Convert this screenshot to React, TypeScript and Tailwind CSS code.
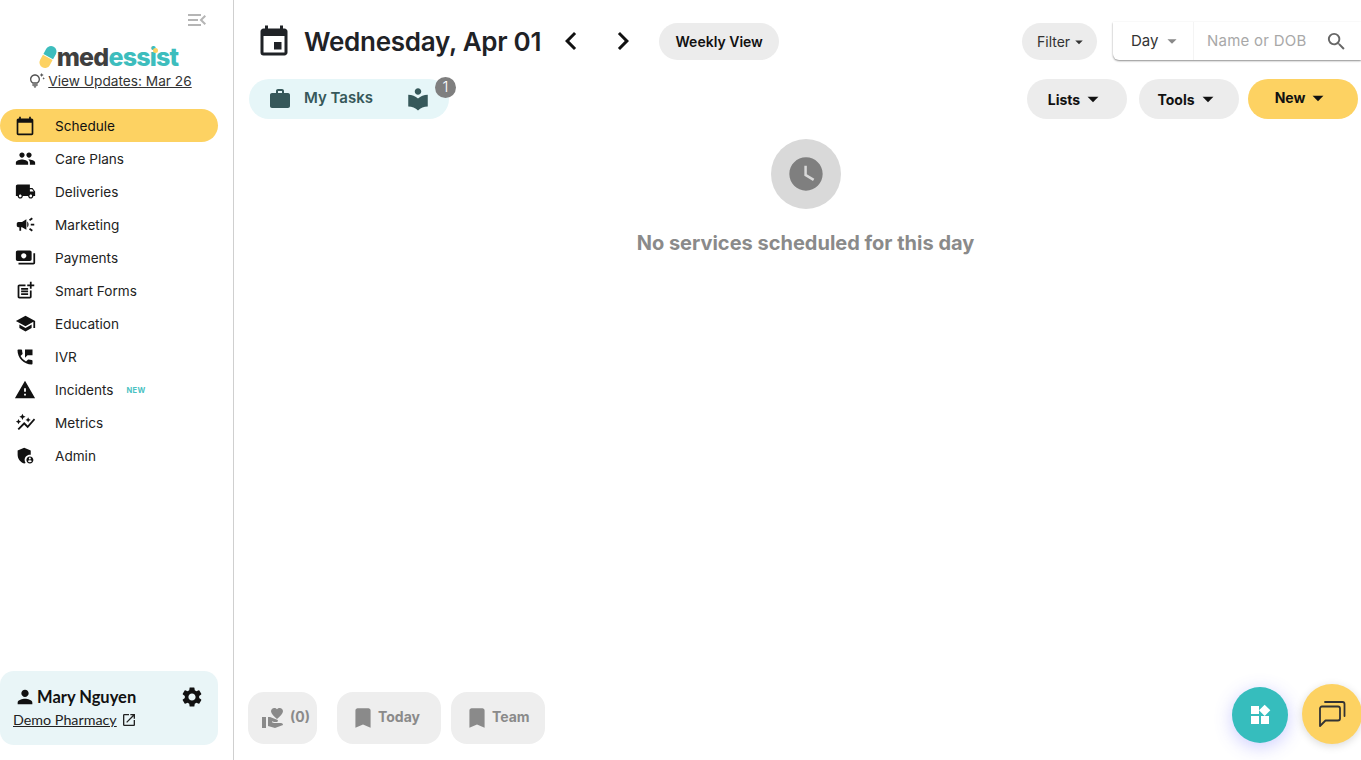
import type { ReactNode } from "react";
import {
  MdAdminPanelSettings,
  MdArrowDropDown,
  MdAutoGraph,
  MdBookmark,
  MdCalendarToday,
  MdCampaign,
  MdChevronLeft,
  MdChevronRight,
  MdEvent,
  MdLocalLibrary,
  MdLocalShipping,
  MdMenuOpen,
  MdOpenInNew,
  MdOutlineTipsAndUpdates,
  MdPayments,
  MdPeople,
  MdPermPhoneMsg,
  MdPerson,
  MdPostAdd,
  MdSchool,
  MdSearch,
  MdSettings,
  MdVolunteerActivism,
  MdWarning,
  MdWatchLater,
  MdWidgets,
  MdWork,
} from "react-icons/md";

const NAV: { label: string; icon: ReactNode; isNew?: boolean; active?: boolean }[] = [
  { label: "Schedule", icon: <MdCalendarToday size={20} />, active: true },
  { label: "Care Plans", icon: <MdPeople size={21} /> },
  { label: "Deliveries", icon: <MdLocalShipping size={21} /> },
  { label: "Marketing", icon: <MdCampaign size={21} /> },
  { label: "Payments", icon: <MdPayments size={21} /> },
  { label: "Smart Forms", icon: <MdPostAdd size={21} /> },
  { label: "Education", icon: <MdSchool size={21} /> },
  { label: "IVR", icon: <MdPermPhoneMsg size={20} /> },
  { label: "Incidents", icon: <MdWarning size={22} />, isNew: true },
  { label: "Metrics", icon: <MdAutoGraph size={21} /> },
  { label: "Admin", icon: <MdAdminPanelSettings size={21} /> },
];

function Logo() {
  return (
    <div className="flex h-[26px] items-center justify-center">
      <svg width="18" height="22" viewBox="0 0 18 22" className="mt-[-1px] overflow-visible">
        <g transform="rotate(29 9 11)">
          <path d="M3.5 10.5V4.75a5.5 5.5 0 0 1 11 0V10.5z" fill="#3dbdbd" />
          <path d="M3.5 11.5h11v5.75a5.5 5.5 0 0 1-11 0z" fill="#fdd262" />
        </g>
      </svg>
      <span className="relative text-[25px] leading-none font-extrabold tracking-[-0.8px] text-[#3f3f3f]">
        med<span className="text-[#3dbdbd]">essist</span>
        <span className="absolute top-[3px] right-[20px] h-[5px] w-[5px] rounded-full bg-[#fdd262]" />
      </span>
    </div>
  );
}

function Sidebar() {
  return (
    <aside className="flex h-full w-[234px] shrink-0 flex-col border-r border-[#cfcfcf] pb-[15px]">
      <div className="flex justify-end pt-[8px] pr-[24px] text-[#b5b5b5]">
        <MdMenuOpen size={24} />
      </div>
      <div className="mt-[12px] pr-[16px]">
        <Logo />
      </div>
      <div className="mt-[1px] flex items-center justify-center gap-[3px] pr-[12px] text-[13.7px] leading-[20px] text-[#333]">
        <MdOutlineTipsAndUpdates size={16} className="text-[#555]" />
        <span className="underline">View Updates: Mar 26</span>
      </div>
      <nav className="mt-[18px] flex flex-col">
        {NAV.map((item) => (
          <div
            key={item.label}
            className={
              item.active
                ? "flex h-[33px] w-[218px] items-center rounded-full bg-[#fdd262] text-[13.6px] text-[#111]"
                : "flex h-[33px] w-[218px] items-center text-[13.6px] text-[#222]"
            }
          >
            <span className="flex w-[50px] justify-center text-[#111]">{item.icon}</span>
            <span className="mt-[2px] ml-[5px]">{item.label}</span>
            {item.isNew && (
              <span className="mt-[2px] ml-[13px] text-[7.5px] font-bold tracking-[0.3px] text-[#49c2c2]">NEW</span>
            )}
          </div>
        ))}
      </nav>
      <div className="mt-auto h-[74px] w-[218px] rounded-[14px] bg-[#e9f5f7] pt-[14px] pr-[14px] pl-[13px]">
        <div className="flex items-center justify-between">
          <div className="flex items-center gap-[1px] pl-[1px]">
            <MdPerson size={22} className="text-[#111]" />
            <span className="font-['Lato',sans-serif] text-[16.5px] leading-[22px] font-bold text-[#111]">
              Mary Nguyen
            </span>
          </div>
          <MdSettings size={24} className="text-[#111]" />
        </div>
        <div className="mt-[1px] flex items-center gap-[4px] font-['Lato',sans-serif] text-[14.3px] leading-[20px] text-[#222]">
          <span className="underline">Demo Pharmacy</span>
          <MdOpenInNew size={16} />
        </div>
      </div>
    </aside>
  );
}

function PillButton({ label, yellow }: { label: string; yellow?: boolean }) {
  return (
    <button
      className={
        yellow
          ? "flex h-[40px] w-[110px] items-center justify-center rounded-full bg-[#fdd262] pb-[3px] text-[14px] font-bold text-[#111]"
          : "flex h-[40px] w-[100px] items-center justify-center rounded-full bg-[#ececec] text-[14px] font-bold text-[#111]"
      }
    >
      {label}
      <MdArrowDropDown size={26} />
    </button>
  );
}

function BottomButton({ icon, label, size }: { icon: ReactNode; label: string; size: string }) {
  return (
    <div className={`flex h-[52px] ${size} items-center rounded-[16px] bg-[#eeeeee] pl-[13px] text-[14px] font-bold text-[#8a8a8a]`}>
      {icon}
      <span className="pb-[3px]">{label}</span>
    </div>
  );
}

function Main() {
  return (
    <main className="flex h-full min-w-0 flex-1 flex-col pl-[14px]">
      <div className="flex items-start pt-[22px]">
        <div className="flex h-[38px] items-center">
          <MdEvent size={36} className="mt-[2px] ml-[8px] text-[#1f2226]" />
          <h1 className="mt-[1px] ml-[12px] text-[26px] font-semibold tracking-[-0.27px] whitespace-nowrap text-[#1f2226]">
            Wednesday, Apr 01
          </h1>
          <MdChevronLeft size={36} className="ml-[12px] text-[#111]" />
          <MdChevronRight size={36} className="ml-[16px] text-[#111]" />
          <button className="ml-[18px] flex h-[37px] w-[120px] items-center justify-center rounded-full bg-[#ececec] text-[14px] font-semibold text-[#111]">
            Weekly View
          </button>
        </div>
        <div className="ml-auto flex items-center">
          <button className="mt-[1px] flex h-[37px] w-[75px] items-center justify-start rounded-full bg-[#ececec] pl-[15px] text-[14px] text-[#333]">
            Filter
            <MdArrowDropDown size={18} />
          </button>
          <div className="ml-[16px] flex h-[38px] w-[248px] items-center rounded-bl-[6px] bg-white shadow-[0_1px_2px_rgba(0,0,0,0.45)]">
            <div className="flex h-full w-[81px] items-center border-r border-[#f4f4f4] pl-[18px] text-[15px] text-[#333]">
              Day
              <MdArrowDropDown size={22} className="ml-[3px] text-[#888]" />
            </div>
            <span className="ml-[13px] text-[15px] tracking-[0.25px] text-[#a8a8a8]">Name or DOB</span>
            <MdSearch size={23} className="ml-[18px] text-[#666]" />
          </div>
        </div>
      </div>
      <div className="mt-[19px] flex items-start">
        <div className="relative ml-[1px] flex h-[40px] w-[200px] items-center rounded-full bg-[#e6f6f8] pl-[19px] text-[#36585a]">
          <MdWork size={24} />
          <span className="ml-[12px] pb-[1px] text-[15px] font-semibold">My Tasks</span>
          <MdLocalLibrary size={26} className="ml-[32px]" />
          <span className="absolute top-[-2px] right-[-7px] flex h-[21px] w-[21px] items-center justify-center rounded-full bg-[#7f7f7f] text-[15px] font-light text-white">
            1
          </span>
        </div>
        <div className="ml-auto flex items-center gap-[12px] pr-[3px]">
          <PillButton label="Lists" />
          <PillButton label="Tools" />
          <div className="ml-[-3px]">
            <PillButton label="New" yellow />
          </div>
        </div>
      </div>
      <div className="mt-[20px] flex flex-col items-center pl-[2px]">
        <div className="flex h-[70px] w-[70px] items-center justify-center rounded-full bg-[#d9d9d9]">
          <MdWatchLater size={40} className="text-[#7f7f7f]" />
        </div>
        <p className="mt-[20px] text-[20px] leading-[28px] font-bold text-[#8a8a8a]">No services scheduled for this day</p>
      </div>
      <div className="mt-auto mb-[16px] flex items-center">
        <BottomButton icon={<MdVolunteerActivism size={24} />} label="(0)" size="w-[69px] gap-[5px]" />
        <div className="ml-[20px]">
          <BottomButton icon={<MdBookmark size={26} />} label="Today" size="w-[104px] gap-[2px]" />
        </div>
        <div className="ml-[10px]">
          <BottomButton icon={<MdBookmark size={26} />} label="Team" size="w-[94px] gap-[2px]" />
        </div>
      </div>
    </main>
  );
}

export default function App() {
  return (
    <div className="relative flex h-[760px] w-full overflow-hidden bg-white font-['Inter',sans-serif]">
      <Sidebar />
      <Main />
      <button className="absolute top-[687px] left-[1232px] flex h-[56px] w-[56px] items-center justify-center rounded-full bg-[#36bdbd] text-white shadow-[0_4px_18px_rgba(90,90,255,0.3)]">
        <MdWidgets size={24} />
      </button>
      <button className="absolute top-[684px] left-[1302px] flex h-[60px] w-[60px] items-center justify-center rounded-full bg-[#fdd262] shadow-[0_2px_8px_rgba(0,0,0,0.15)]">
        <svg width="30" height="30" viewBox="0 0 30 30" fill="none" stroke="#333" strokeWidth="1.8" strokeLinejoin="round">
          <path d="M3 27V9.5a2 2 0 0 1 2-2h16a2 2 0 0 1 2 2v10a2 2 0 0 1-2 2H8.5z" />
          <path d="M8 3h17.5a2 2 0 0 1 2 2v12" strokeLinecap="round" />
        </svg>
      </button>
    </div>
  );
}
